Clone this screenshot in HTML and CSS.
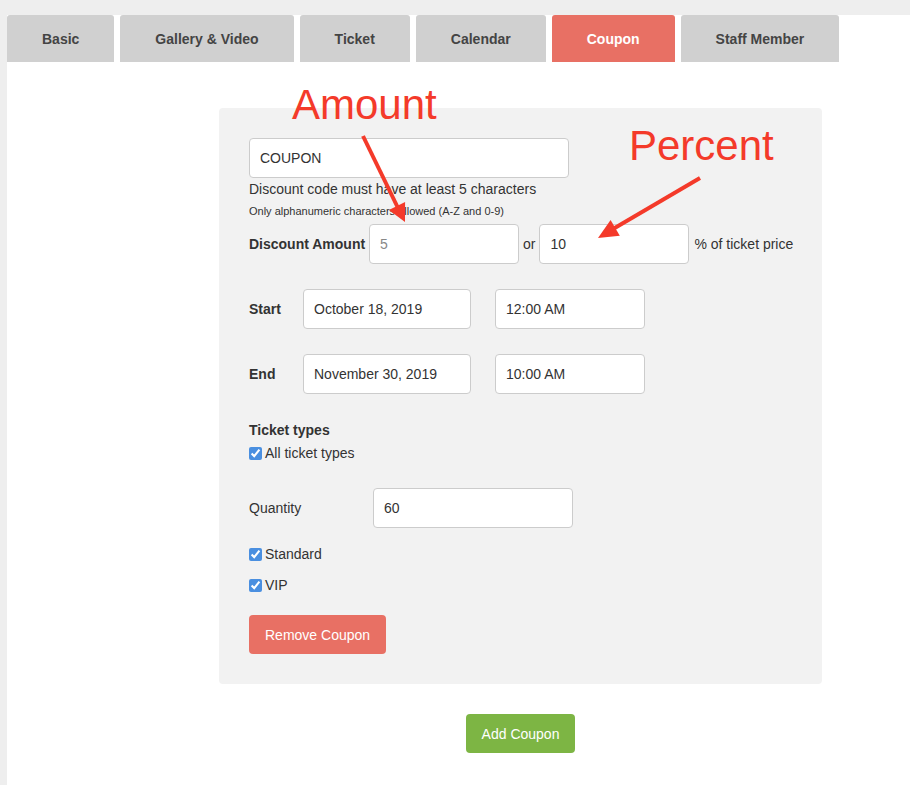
FILE: index.html
```html
<!DOCTYPE html>
<html lang="en">
<head>
    <meta charset="UTF-8">
    <meta name="viewport" content="width=device-width, initial-scale=1.0">
    <title>Event - Coupon</title>
    <link rel="stylesheet" href="styles.css">
</head>
<body>

<div class="page">
  <nav class="tabs">
    <a class="tab">Basic</a>
    <a class="tab">Gallery &amp; Video</a>
    <a class="tab">Ticket</a>
    <a class="tab">Calendar</a>
    <a class="tab active">Coupon</a>
    <a class="tab">Staff Member</a>
  </nav>

  <div class="coupon-box">
    <input type="text" class="field code-field" value="COUPON">
    <p class="hint">Discount code must have at least 5 characters</p>
    <p class="hint-small">Only alphanumeric characters allowed (A-Z and 0-9)</p>

    <div class="row discount-row">
      <label class="row-label bold">Discount Amount</label>
      <input type="text" class="field short-field" placeholder="5">
      <span class="or">or</span>
      <input type="text" class="field short-field" value="10">
      <span class="suffix">% of ticket price</span>
    </div>

    <div class="row date-row">
      <label class="row-label bold date-label">Start</label>
      <input type="text" class="field date-field" value="October 18, 2019">
      <input type="text" class="field short-field" value="12:00 AM">
    </div>

    <div class="row date-row">
      <label class="row-label bold date-label">End</label>
      <input type="text" class="field date-field" value="November 30, 2019">
      <input type="text" class="field short-field" value="10:00 AM">
    </div>

    <p class="section-title">Ticket types</p>
    <label class="check all-types"><input type="checkbox" checked>All ticket types</label>

    <div class="row qty-row">
      <label class="row-label qty-label">Quantity</label>
      <input type="text" class="field qty-field" value="60">
    </div>

    <label class="check standard"><input type="checkbox" checked>Standard</label>
    <label class="check vip"><input type="checkbox" checked>VIP</label>

    <button class="btn btn-remove">Remove Coupon</button>
  </div>

  <div class="actions">
    <button class="btn btn-add">Add Coupon</button>
  </div>
</div>

<!-- notes drawn over the screenshot -->
<svg class="notes" width="910" height="785" viewBox="0 0 910 785">
  <text x="292" y="119" class="note-text">Amount</text>
  <text x="629" y="160" class="note-text">Percent</text>
  <line x1="363" y1="136" x2="398" y2="208" class="note-line"/>
  <polygon points="405,222 388.9,209.9 405.1,201.9" class="note-head"/>
  <line x1="700" y1="178" x2="613" y2="229" class="note-line"/>
  <polygon points="598,238 610.6,220.1 619.8,235.7" class="note-head"/>
</svg>

</body>
</html>
```

FILE: styles.css
```css
body {
    margin: 0;
    background: #eeeeee;
    font-family: 'Liberation Sans', Arial, sans-serif;
    font-size: 14px;
    color: #333;
    position: relative;
}
.page {
    margin: 15px 0 0 7px;
    background: #fff;
    min-height: calc(100vh - 15px);
    overflow: hidden;
}
.tabs {
    display: flex;
    gap: 6px;
}
.tab {
    height: 47px;
    line-height: 49px;
    padding: 0 35px;
    background: #d0d0d0;
    color: #444;
    font-weight: bold;
    font-size: 14px;
    border-radius: 3px 3px 0 0;
    cursor: pointer;
}
.tab.active {
    background: #e87064;
    color: #fff;
}
.coupon-box {
    margin: 46px 0 0 212px;
    width: 603px;
    box-sizing: border-box;
    padding: 30px;
    background: #f2f2f2;
    border-radius: 4px;
}
.field {
    height: 40px;
    box-sizing: border-box;
    border: 1px solid #ccc;
    border-radius: 4px;
    padding: 0 10px;
    background: #fff;
    font-family: inherit;
    font-size: 14px;
    color: #333;
    margin: 0;
    flex-shrink: 0;
}
.field::placeholder {
    color: #888;
}
.code-field { width: 320px; display: block; }
.short-field { width: 150px; }
.date-field { width: 168px; margin-right: 24px; }
.qty-field { width: 200px; }
.hint {
    margin: 2px 0 0;
    line-height: 18px;
}
.hint-small {
    margin: 6px 0 0;
    font-size: 11px;
    line-height: 14px;
}
.row {
    display: flex;
    align-items: center;
}
.bold { font-weight: bold; }
.row-label { width: 120px; flex-shrink: 0; }
.discount-row { margin-top: 6px; }
.or { margin: 0 4px; }
.suffix { margin-left: 5px; white-space: nowrap; }
.date-row { margin-top: 25px; }
.date-label { width: 54px; }
.section-title {
    margin: 27px 0 0;
    font-weight: bold;
    line-height: 18px;
}
/* checkboxes */
.check {
    display: flex;
    align-items: center;
    line-height: 18px;
}
.check input {
    width: 13px;
    height: 13px;
    margin: 0 3px 0 0;
    accent-color: #4a8fe0;
}
.all-types { margin-top: 5px; }
.qty-row { margin-top: 26px; }
.qty-label { width: 124px; }
.standard { margin-top: 17px; }
.vip { margin-top: 13px; }
.btn {
    height: 39px;
    border: none;
    border-radius: 4px;
    color: #fff;
    font-family: inherit;
    font-size: 14px;
    padding: 0 16px;
    cursor: pointer;
}
.btn-remove {
    margin-top: 21px;
    background: #e87064;
}
.actions {
    margin: 30px 0 0 212px;
    width: 603px;
    text-align: center;
}
.btn-add {
    background: #7db544;
}
.notes {
    position: absolute;
    top: 0;
    left: 0;
    pointer-events: none;
}
.note-text {
    font-family: 'Liberation Sans', Arial, sans-serif;
    font-size: 42px;
    fill: #f43a2a;
}
.note-line {
    stroke: #f43a2a;
    stroke-width: 4;
}
.note-head {
    fill: #f43a2a;
}
```
